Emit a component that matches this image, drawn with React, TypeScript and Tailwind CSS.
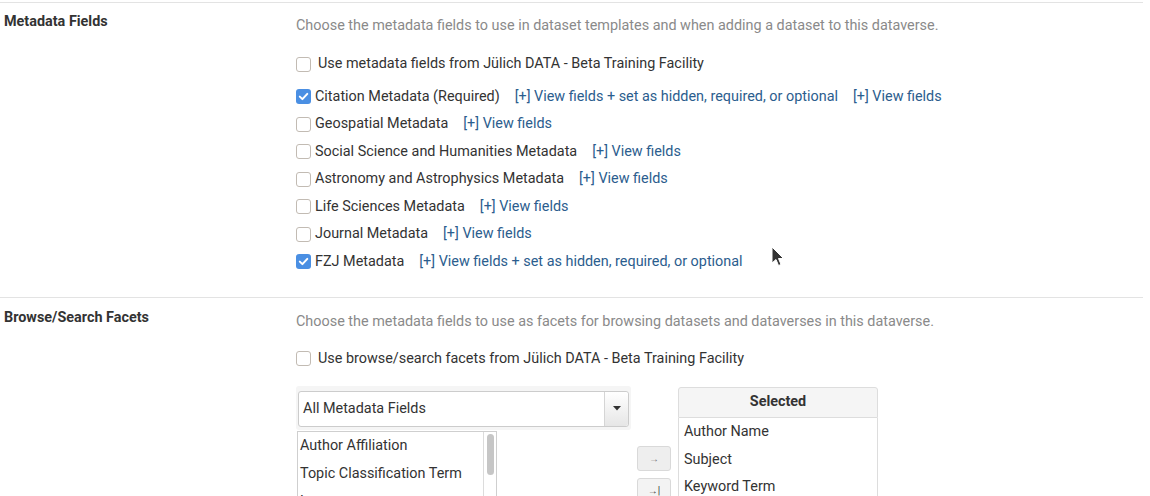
import React from "react";

function Box({ checked }: { checked?: boolean }) {
  if (checked) {
    return (
      <span className="w-[15px] h-[15px] shrink-0 rounded-[3px] bg-[#4a8fe3] flex items-center justify-center">
        <svg width="11" height="11" viewBox="0 0 11 11">
          <path d="M1.8 5.6 L4.4 8.1 L9.3 2.9" fill="none" stroke="#fff" strokeWidth="2" strokeLinecap="round" strokeLinejoin="round" />
        </svg>
      </span>
    );
  }
  return <span className="w-[15px] h-[15px] shrink-0 rounded-[3px] border border-[#c2bbb3] bg-white" />;
}

function Link({ children }: { children: React.ReactNode }) {
  return <a className="text-[#2b5d8e] ml-[15px] whitespace-nowrap">{children}</a>;
}

const blocks: { label: string; checked?: boolean; links: string[] }[] = [
  { label: "Citation Metadata (Required)", checked: true, links: ["[+] View fields + set as hidden, required, or optional", "[+] View fields"] },
  { label: "Geospatial Metadata", links: ["[+] View fields"] },
  { label: "Social Science and Humanities Metadata", links: ["[+] View fields"] },
  { label: "Astronomy and Astrophysics Metadata", links: ["[+] View fields"] },
  { label: "Life Sciences Metadata", links: ["[+] View fields"] },
  { label: "Journal Metadata", links: ["[+] View fields"] },
  { label: "FZJ Metadata", checked: true, links: ["[+] View fields + set as hidden, required, or optional"] },
];

export default function App() {
  return (
    <div className="relative w-[1150px] h-[496px] overflow-hidden bg-white text-[14.4px] text-[#333] font-['Roboto',sans-serif]">
      <div className="w-[1143px] pt-[2px]">
        {/* Section 1 */}
        <section className="border-t border-[#e3e3e3] grid grid-cols-[296px_1fr] pb-[21px]">
          <div className="pl-[4px] pt-[9px] leading-[20px] font-bold text-[#333]">Metadata Fields</div>
          <div className="pt-[13px]">
            <p className="leading-[20px] text-[#8a8a8a]">
              Choose the metadata fields to use in dataset templates and when adding a dataset to this dataverse.
            </p>
            <div className="mt-[14px] h-[28px] flex items-center">
              <Box />
              <span className="ml-[7px]">Use metadata fields from Jülich DATA - Beta Training Facility</span>
            </div>
            <div className="mt-[5px]">
              {blocks.map((b) => (
                <div key={b.label} className="h-[27.5px] flex items-center">
                  <Box checked={b.checked} />
                  <span className="ml-[4px] whitespace-nowrap">{b.label}</span>
                  {b.links.map((l) => (
                    <Link key={l}>{l}</Link>
                  ))}
                </div>
              ))}
            </div>
          </div>
        </section>

        {/* Section 2 */}
        <section className="border-t border-[#e3e3e3] grid grid-cols-[296px_1fr]">
          <div className="pl-[4px] pt-[10px] leading-[20px] font-bold text-[#333]">Browse/Search Facets</div>
          <div className="pt-[14px]">
            <p className="leading-[20px] text-[#8a8a8a]">
              Choose the metadata fields to use as facets for browsing datasets and dataverses in this dataverse.
            </p>
            <div className="mt-[13px] h-[28px] flex items-center">
              <Box />
              <span className="ml-[7px]">Use browse/search facets from Jülich DATA - Beta Training Facility</span>
            </div>

            <div className="mt-[13px] flex items-start">
              {/* Available */}
              <div className="w-[335px]">
                <div className="bg-[#f5f5f5] rounded-[3px] px-[2px] pt-[5px] pb-[3px]">
                  <div className="h-[36px] bg-white border border-[#cccccc] rounded-[3px] flex items-stretch">
                    <div className="flex-1 flex items-center pl-[4px] text-[#333]">All Metadata Fields</div>
                    <div className="w-[24px] border-l border-[#d5d5d5] bg-gradient-to-b from-[#ffffff] to-[#e6e6e6] rounded-r-[3px] flex items-center justify-center">
                      <svg width="8" height="5" viewBox="0 0 8 5">
                        <path d="M0 0 H8 L4 4.5 Z" fill="#333" />
                      </svg>
                    </div>
                  </div>
                </div>
                <div className="relative ml-[1px] mt-[1px] w-[200px] h-[80px] border-l border-t border-r border-[#cfcfcf] flex">
                  <div className="flex-1 border-r border-[#dcdcdc]">
                    <div className="h-[28px] flex items-center pl-[2px]">Author Affiliation</div>
                    <div className="h-[28px] flex items-center pl-[2px]">Topic Classification Term</div>
                    <div className="h-[28px] flex items-center pl-[2px]">Language</div>
                  </div>
                  <div className="w-[12px] pt-[2px] flex justify-center">
                    <div className="w-[7px] h-[41px] rounded-full bg-[#c6c6c6]" />
                  </div>
                </div>
              </div>

              {/* Buttons */}
              <div className="ml-[6px] pt-[60px] flex flex-col gap-[7px]">
                <button className="w-[34px] h-[25px] bg-[#eeeeee] border border-[#d9d9d9] rounded-[3px] text-[10px] text-[#777] flex items-center justify-center">→</button>
                <button className="w-[34px] h-[25px] bg-[#f3f3f3] border border-[#d9d9d9] rounded-[3px] text-[10px] text-[#333] flex items-center justify-center">→|</button>
              </div>

              {/* Selected */}
              <div className="ml-[7px] w-[200px] mt-[1px]">
                <div className="h-[31px] bg-[#f5f5f5] border border-[#dddddd] rounded-t-[3px] flex items-center justify-center font-bold">Selected</div>
                <div className="border-l border-r border-[#dddddd] h-[90px] pl-[5px] pt-[1px]">
                  <div className="h-[27.5px] flex items-center">Author Name</div>
                  <div className="h-[27.5px] flex items-center">Subject</div>
                  <div className="h-[27.5px] flex items-center">Keyword Term</div>
                </div>
              </div>
            </div>
          </div>
        </section>
      </div>

      {/* Mouse cursor */}
      <svg className="absolute left-[771px] top-[246px]" width="14" height="22" viewBox="0 0 14 22">
        <path d="M1 1 L1 17 L5 13.5 L7.5 19.5 L10 18.5 L7.5 12.5 L12.5 12.5 Z" fill="#333" stroke="#fff" strokeWidth="1" strokeLinejoin="round" />
      </svg>
    </div>
  );
}
